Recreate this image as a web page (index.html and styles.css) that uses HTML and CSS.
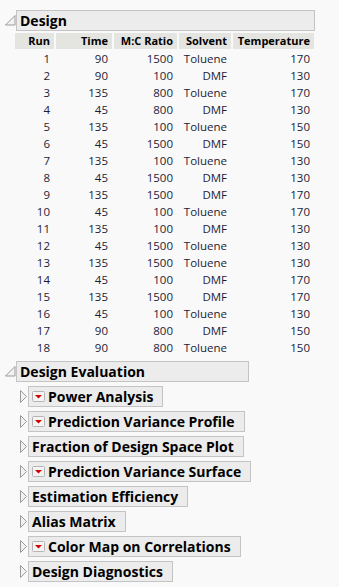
FILE: index.html
```html
<!DOCTYPE html>
<html lang="en">
<head>
  <meta charset="UTF-8" />
  <meta name="viewport" content="width=device-width, initial-scale=1.0"/>
  <title>Design</title>
  <link rel="stylesheet" href="styles.css">
</head>
<body>
  <div class="node">
    <svg class="open" width="11" height="11" viewBox="0 0 11 11"><polygon points="10,0.5 10,10 0.5,10" /></svg>
    <div class="title design-title">Design</div>
  </div>

  <div class="grid">
    <div class="hd">Run</div><div class="hd">Time</div><div class="hd">M:C Ratio</div><div class="hd">Solvent</div><div class="hd">Temperature</div>
    <div>1</div><div>90</div><div>1500</div><div>Toluene</div><div>170</div>
    <div>2</div><div>90</div><div>100</div><div>DMF</div><div>130</div>
    <div>3</div><div>135</div><div>800</div><div>Toluene</div><div>170</div>
    <div>4</div><div>45</div><div>800</div><div>DMF</div><div>130</div>
    <div>5</div><div>135</div><div>100</div><div>Toluene</div><div>150</div>
    <div>6</div><div>45</div><div>1500</div><div>DMF</div><div>150</div>
    <div>7</div><div>135</div><div>100</div><div>Toluene</div><div>130</div>
    <div>8</div><div>45</div><div>1500</div><div>DMF</div><div>130</div>
    <div>9</div><div>135</div><div>1500</div><div>DMF</div><div>170</div>
    <div>10</div><div>45</div><div>100</div><div>Toluene</div><div>170</div>
    <div>11</div><div>135</div><div>100</div><div>DMF</div><div>130</div>
    <div>12</div><div>45</div><div>1500</div><div>Toluene</div><div>130</div>
    <div>13</div><div>135</div><div>1500</div><div>Toluene</div><div>130</div>
    <div>14</div><div>45</div><div>100</div><div>DMF</div><div>170</div>
    <div>15</div><div>135</div><div>1500</div><div>DMF</div><div>170</div>
    <div>16</div><div>45</div><div>100</div><div>Toluene</div><div>130</div>
    <div>17</div><div>90</div><div>800</div><div>DMF</div><div>150</div>
    <div>18</div><div>90</div><div>800</div><div>Toluene</div><div>150</div>
  </div>

  <div class="node eval">
    <svg class="open" width="11" height="11" viewBox="0 0 11 11"><polygon points="10,0.5 10,10 0.5,10" /></svg>
    <div class="title eval-title">Design Evaluation</div>
  </div>

  <div class="items">
    <div class="node sub">
      <svg class="closed" width="7" height="13" viewBox="0 0 7 13"><polygon points="0.5,0.5 6.5,6.5 0.5,12.5" /></svg>
      <div class="title"><svg class="menu" width="13" height="11" viewBox="0 0 13 11"><rect x="0.5" y="0.5" width="12" height="10" rx="1" /><polygon points="3,4 10,4 6.5,7.5" /></svg>Power Analysis</div>
    </div>
    <div class="node sub">
      <svg class="closed" width="7" height="13" viewBox="0 0 7 13"><polygon points="0.5,0.5 6.5,6.5 0.5,12.5" /></svg>
      <div class="title"><svg class="menu" width="13" height="11" viewBox="0 0 13 11"><rect x="0.5" y="0.5" width="12" height="10" rx="1" /><polygon points="3,4 10,4 6.5,7.5" /></svg>Prediction Variance Profile</div>
    </div>
    <div class="node sub">
      <svg class="closed" width="7" height="13" viewBox="0 0 7 13"><polygon points="0.5,0.5 6.5,6.5 0.5,12.5" /></svg>
      <div class="title">Fraction of Design Space Plot</div>
    </div>
    <div class="node sub">
      <svg class="closed" width="7" height="13" viewBox="0 0 7 13"><polygon points="0.5,0.5 6.5,6.5 0.5,12.5" /></svg>
      <div class="title"><svg class="menu" width="13" height="11" viewBox="0 0 13 11"><rect x="0.5" y="0.5" width="12" height="10" rx="1" /><polygon points="3,4 10,4 6.5,7.5" /></svg>Prediction Variance Surface</div>
    </div>
    <div class="node sub">
      <svg class="closed" width="7" height="13" viewBox="0 0 7 13"><polygon points="0.5,0.5 6.5,6.5 0.5,12.5" /></svg>
      <div class="title">Estimation Efficiency</div>
    </div>
    <div class="node sub">
      <svg class="closed" width="7" height="13" viewBox="0 0 7 13"><polygon points="0.5,0.5 6.5,6.5 0.5,12.5" /></svg>
      <div class="title">Alias Matrix</div>
    </div>
    <div class="node sub">
      <svg class="closed" width="7" height="13" viewBox="0 0 7 13"><polygon points="0.5,0.5 6.5,6.5 0.5,12.5" /></svg>
      <div class="title"><svg class="menu" width="13" height="11" viewBox="0 0 13 11"><rect x="0.5" y="0.5" width="12" height="10" rx="1" /><polygon points="3,4 10,4 6.5,7.5" /></svg>Color Map on Correlations</div>
    </div>
    <div class="node sub">
      <svg class="closed" width="7" height="13" viewBox="0 0 7 13"><polygon points="0.5,0.5 6.5,6.5 0.5,12.5" /></svg>
      <div class="title">Design Diagnostics</div>
    </div>
  </div>
</body>
</html>
```

FILE: styles.css
```css
body {
  margin: 0;
  padding: 10px 0 0 5px;
  background: #f9f9f9;
  font-family: "Open Sans", Arial, sans-serif;
  color: #000;
}
.node {
  display: flex;
  align-items: center;
}
.open polygon,
.closed polygon {
  fill: #f2f2f2;
  stroke: #9a9a9a;
  stroke-width: 1;
}
.title {
  display: flex;
  align-items: center;
  box-sizing: border-box;
  height: 21px;
  padding: 0 9px 0 3px;
  border: 1px solid #c4c4c4;
  background: #ececec;
  font-size: 14px;
  font-weight: bold;
  line-height: 19px;
  white-space: nowrap;
}
.design-title {
  width: 299px;
}
.eval-title {
  width: 233px;
}
.grid {
  display: grid;
  grid-template-columns: 39px 58px 65px 54px 83px;
  grid-auto-rows: 17px;
  margin: 2px 0 0 10px;
  font-size: 11.5px;
  color: #1c1c38;
}
.grid div {
  text-align: right;
  padding-right: 4px;
  line-height: 17px;
}
.grid .hd {
  height: 16px;
  line-height: 16px;
  background: #e4e4e0;
  border-left: 2px solid #f9f9f9;
  font-weight: bold;
  font-size: 11px;
  color: #000;
}
.grid .hd:first-child {
  border-left: none;
}
.eval {
  margin-top: 5px;
}
.items {
  display: flex;
  flex-direction: column;
  gap: 4px;
  margin: 4px 0 0 15px;
}
.sub {
  gap: 1px;
}
.menu {
  margin-right: 3px;
}
.menu rect {
  fill: #f4f4f4;
  stroke: #b4b4b4;
}
.menu polygon {
  fill: #d00000;
}
```
